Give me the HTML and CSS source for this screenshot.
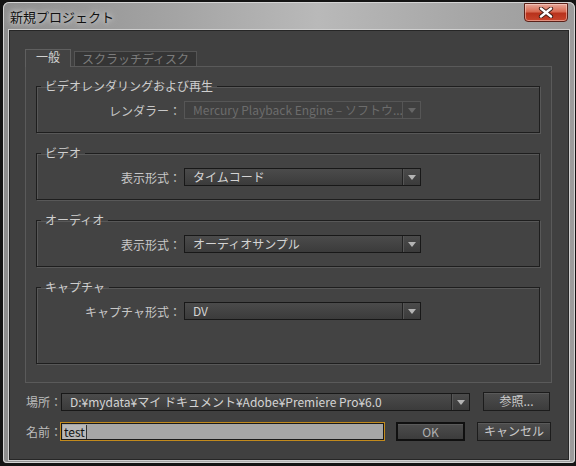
FILE: index.html
```html
<!DOCTYPE html>
<html lang="ja">
<head>
  <meta charset="UTF-8">
  <title>新規プロジェクト</title>
  <link rel="stylesheet" href="styles.css">
</head>
<body>

  <div class="frame">
    <!-- barra del titolo -->
    <div class="titlebar">
      <span class="title">新規プロジェクト</span>
      <div class="close-btn">
        <svg width="16" height="11" viewBox="0 0 16 11">
          <path d="M3 1.5 L13 9.5 M13 1.5 L3 9.5" stroke="#3a1a14" stroke-width="4.2" stroke-linecap="round"/>
          <path d="M3 1.5 L13 9.5 M13 1.5 L3 9.5" stroke="#ffffff" stroke-width="2.4" stroke-linecap="round"/>
        </svg>
      </div>
    </div>

    <div class="client">
      <div class="tabs">
        <div class="tab active">一般</div>
        <div class="tab">スクラッチディスク</div>
      </div>

      <div class="panel">
        <fieldset class="group">
          <legend>ビデオレンダリングおよび再生</legend>
          <div class="row">
            <label>レンダラー：</label>
            <div class="dropdown disabled"><span class="value">Mercury Playback Engine –  ソフトウ...</span><span class="arrow"></span></div>
          </div>
        </fieldset>

        <fieldset class="group">
          <legend>ビデオ</legend>
          <div class="row">
            <label>表示形式：</label>
            <div class="dropdown"><span class="value">タイムコード</span><span class="arrow"></span></div>
          </div>
        </fieldset>

        <fieldset class="group">
          <legend>オーディオ</legend>
          <div class="row">
            <label>表示形式：</label>
            <div class="dropdown"><span class="value">オーディオサンプル</span><span class="arrow"></span></div>
          </div>
        </fieldset>

        <fieldset class="group tall">
          <legend>キャプチャ</legend>
          <div class="row">
            <label>キャプチャ形式：</label>
            <div class="dropdown"><span class="value">DV</span><span class="arrow"></span></div>
          </div>
        </fieldset>
      </div>

      <div class="bottom-row">
        <span class="small-label">場所：</span>
        <div class="dropdown location"><span class="value">D:¥mydata¥マイ ドキュメント¥Adobe¥Premiere Pro¥6.0</span><span class="arrow"></span></div>
        <div class="btn browse">参照...</div>
      </div>

      <div class="bottom-row name-row">
        <span class="small-label">名前：</span>
        <div class="name-input"><span class="sel">test</span></div>
        <div class="btn ok">OK</div>
        <div class="btn cancel">キャンセル</div>
      </div>
    </div>
  </div>

</body>
</html>
```

FILE: styles.css
```css
* {
  margin: 0;
  padding: 0;
  box-sizing: border-box;
}
body {
  width: 576px;
  height: 466px;
  background: #141414;
  font-family: "Noto Sans CJK JP", sans-serif;
  font-size: 12px;
  color: #c8c8c8;
  overflow: hidden;
}
.frame {
  margin: 2px 1px 0 3px;
  width: 572px;
  height: 461px;
  border-radius: 6px 6px 4px 4px;
  background: linear-gradient(to right, #8e8e8e 0%, #a4a4a4 30%, #b9b9b9 55%, #a7a7a7 80%, #9c9c9c 100%);
  box-shadow: inset 0 0 0 1px #d4d4d4;
  padding: 0 6px 3px 6px;
  display: flex;
  flex-direction: column;
}
.titlebar {
  height: 28px;
  display: flex;
  align-items: flex-start;
  justify-content: space-between;
  flex-shrink: 0;
}
.title {
  font-size: 13px;
  color: #111;
  margin-top: 5px;
  margin-left: 1px;
  text-shadow: 0 0 8px rgba(255, 255, 255, 0.8), 0 0 4px rgba(255, 255, 255, 0.5);
}
.close-btn {
  width: 44px;
  height: 19px;
  margin-top: 1px;
  margin-right: 1px;
  border: 1px solid #5a2119;
  border-radius: 0 0 4px 4px;
  background: linear-gradient(#e6a89a 0%, #d86a52 45%, #b8321c 55%, #c8452c 100%);
  box-shadow: inset 0 0 0 1px rgba(255, 220, 210, 0.5);
  display: flex;
  justify-content: center;
  align-items: center;
}

/* area client */
.client {
  flex: 1;
  background: #404040;
  border: 1px solid #262626;
  box-shadow: 0 0 0 1px #cfcfcf;
  padding: 18px 16px 0 15px;
  display: flex;
  flex-direction: column;
}
.tabs {
  display: flex;
  height: 17px;
  align-items: flex-end;
  flex-shrink: 0;
}
.tab {
  height: 15px;
  line-height: 14px;
  margin-left: 3px;
  background: #353535;
  color: #7c7c7c;
  border: 1px solid #555;
  border-bottom: none;
  width: 123px;
  text-align: center;
  white-space: nowrap;
}
.tab.active {
  height: 18px;
  margin-left: 0;
  width: 46px;
  background: #434343;
  color: #d0d0d0;
  border-color: #5f5f5f;
  position: relative;
  top: 1px;
}
.panel {
  height: 317px;
  flex-shrink: 0;
  border: 1px solid #5a5a5a;
  background: #434343;
  padding: 12px 11px 0 10px;
}
.group {
  border: 1px solid #1e1e1e;
  box-shadow: 1px 1px 0 #585858, inset 1px 1px 0 #585858;
  padding: 8px 0 13px 0;
  margin-bottom: 13px;
}
.group legend {
  margin-left: 4px;
  padding: 0 4px;
  line-height: 14px;
  color: #cfcfcf;
}
.group.tall {
  padding-bottom: 43px;
  margin-bottom: 0;
}
.row {
  display: flex;
  align-items: center;
}
.row label {
  width: 144px;
  text-align: right;
  margin-right: 3px;
  white-space: nowrap;
}

/* menu a tendina */
.dropdown {
  width: 237px;
  height: 18px;
  display: flex;
  flex-shrink: 0;
  border: 1px solid #181818;
  background: linear-gradient(#4b4b4b, #3b3b3b);
  color: #d4d4d4;
}
.dropdown .value {
  flex: 1;
  padding-left: 8px;
  line-height: 16px;
  white-space: nowrap;
  overflow: hidden;
}
.dropdown .arrow {
  width: 18px;
  border-left: 1px solid #222;
  box-shadow: inset 1px 0 0 #565656;
  position: relative;
}
.dropdown .arrow::after {
  content: "";
  position: absolute;
  left: 5px;
  top: 6px;
  border-left: 4px solid transparent;
  border-right: 4px solid transparent;
  border-top: 5px solid #b4b4b4;
}
.dropdown.disabled {
  border-color: #565656;
  background: #404040;
  color: #6c6c6c;
}
.dropdown.disabled .arrow {
  border-left-color: #565656;
  box-shadow: none;
}
.dropdown.disabled .arrow::after {
  border-top-color: #666;
}

/* righe in basso */
.bottom-row {
  display: flex;
  align-items: center;
  margin-top: 9px;
  height: 19px;
  flex-shrink: 0;
}
.name-row {
  margin-top: 11px;
}
.small-label {
  width: 35px;
  flex-shrink: 0;
  white-space: nowrap;
  color: #bcbcbc;
  margin-left: 1px;
}
.dropdown.location {
  width: 409px;
  height: 18px;
}
.btn {
  height: 19px;
  line-height: 16px;
  text-align: center;
  flex-shrink: 0;
  border: 1px solid #1c1c1c;
  background: linear-gradient(#4d4d4d, #3c3c3c);
  color: #cacaca;
  box-shadow: inset 0 1px 0 #5a5a5a;
}
.browse {
  width: 67px;
  margin-left: 13px;
}
.name-input {
  width: 325px;
  height: 19px;
  flex-shrink: 0;
  margin-left: -1px;
  border: 1px solid #c28a1c;
  background: #a6a6a6;
  box-shadow: inset 0 0 0 1px #1a1a1a;
  padding: 2px 0 0 2px;
  color: #111;
  line-height: 14px;
}
.name-input .sel {
  display: inline-block;
  background: #b8b8b8;
  border-right: 1px solid #333;
  padding: 0 1px;
  height: 14px;
}
.ok {
  width: 69px;
  margin-left: 11px;
  border: 2px solid #101010;
  line-height: 15px;
  color: #b0b0b0;
}
.cancel {
  width: 74px;
  margin-left: 12px;
}
```
